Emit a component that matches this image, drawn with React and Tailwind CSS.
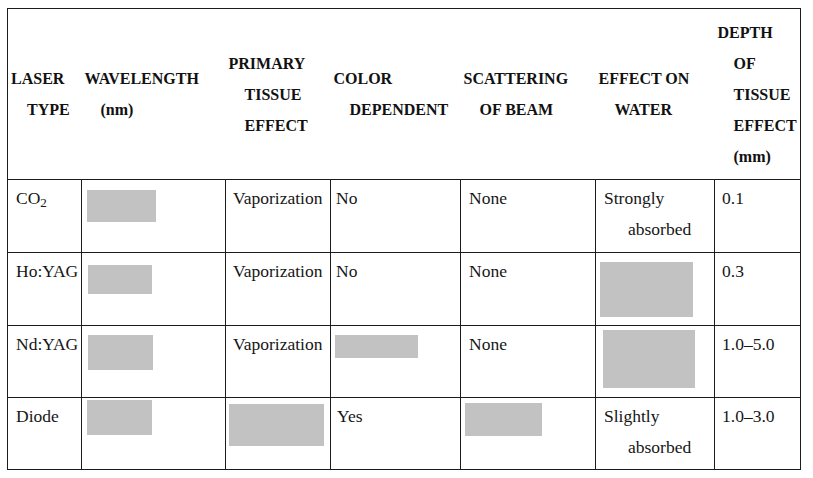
const line = "border-[#1c1c1c]";

const head = [
  ["LASER", "TYPE"],
  ["WAVELENGTH", "(nm)"],
  ["PRIMARY", "TISSUE", "EFFECT"],
  ["COLOR", "DEPENDENT"],
  ["SCATTERING", "OF BEAM"],
  ["EFFECT ON", "WATER"],
  ["DEPTH", "OF", "TISSUE", "EFFECT", "(mm)"],
];

const widths = ["w-[74px]", "w-[144px]", "w-[105px]", "w-[130px]", "w-[135px]", "w-[119px]", "w-[86px]"];

// a cell is either text, or a grey block (ml, mt, w, h)
const rows = [
  {
    h: "h-[73px]",
    cells: [
      { text: <>CO<sub>2</sub></> },
      { box: "ml-[5px] mt-[10px] w-[69px] h-[32px]" },
      { text: "Vaporization", pad: "pl-[7px]" },
      { text: "No", pad: "pl-[5px]" },
      { text: "None" },
      { text: ["Strongly", "absorbed"] },
      { text: "0.1", pad: "pl-[7px]" },
    ],
  },
  {
    h: "h-[73px]",
    cells: [
      { text: "Ho:YAG" },
      { box: "ml-[6px] mt-[12px] w-[64px] h-[29px]" },
      { text: "Vaporization", pad: "pl-[7px]" },
      { text: "No", pad: "pl-[5px]" },
      { text: "None" },
      { box: "ml-[4px] mt-[9px] w-[93px] h-[55px]" },
      { text: "0.3", pad: "pl-[7px]" },
    ],
  },
  {
    h: "h-[72px]",
    cells: [
      { text: "Nd:YAG" },
      { box: "ml-[6px] mt-[9px] w-[65px] h-[35px]" },
      { text: "Vaporization", pad: "pl-[7px]" },
      { box: "ml-[4px] mt-[9px] w-[83px] h-[23px]" },
      { text: "None" },
      { box: "ml-[7px] mt-[4px] w-[92px] h-[58px]" },
      { text: "1.0–5.0", pad: "pl-[7px]" },
    ],
  },
  {
    h: "h-[72px]",
    cells: [
      { text: "Diode" },
      { box: "ml-[5px] mt-[2px] w-[65px] h-[35px]" },
      { box: "ml-[3px] mt-[6px] w-[95px] h-[42px]" },
      { text: "Yes", pad: "pl-[6px]" },
      { box: "ml-[4px] mt-[5px] w-[77px] h-[33px]" },
      { text: ["Slightly", "absorbed"] },
      { text: "1.0–3.0", pad: "pl-[7px]" },
    ],
  },
];

function BodyCell({ cell }) {
  if (cell.box) {
    return (
      <td className={`border ${line} p-0 align-top`}>
        <div className={`bg-[#c2c2c2] ${cell.box}`} />
      </td>
    );
  }
  const pad = cell.pad || "pl-[8px]";
  if (Array.isArray(cell.text)) {
    return (
      <td className={`border ${line} pt-[3px] pr-1 pl-[32px] -indent-[24px] align-top whitespace-nowrap`}>
        {cell.text[0]}
        <br />
        {cell.text[1]}
      </td>
    );
  }
  return (
    <td className={`border ${line} pt-[3px] pr-1 ${pad} align-top whitespace-nowrap`}>{cell.text}</td>
  );
}

export default function App() {
  return (
    <div className="w-[813px] h-[478px] bg-white pl-[7px] pt-[8px] font-['Liberation_Serif','Times_New_Roman',serif] text-[#161616]">
      <table className="border-collapse table-fixed w-[793px]">
        <thead>
          <tr className="h-[171px]">
            {head.map((lines, i) => (
              <th
                key={i}
                className={`${widths[i]} border-y ${line} ${i === 0 ? "border-l" : ""} ${i === 6 ? "border-r" : ""} pl-[19px] pr-0 -indent-4 text-left align-middle text-[16px] leading-[31px] font-bold text-[#111] whitespace-nowrap`}
              >
                {lines.map((t, j) => (
                  <span key={j}>
                    {j > 0 && <br />}
                    {t}
                  </span>
                ))}
              </th>
            ))}
          </tr>
        </thead>
        <tbody className="text-[17.5px] leading-[31px]">
          {rows.map((row, r) => (
            <tr key={r} className={row.h}>
              {row.cells.map((c, i) => (
                <BodyCell key={i} cell={c} />
              ))}
            </tr>
          ))}
        </tbody>
      </table>
    </div>
  );
}
